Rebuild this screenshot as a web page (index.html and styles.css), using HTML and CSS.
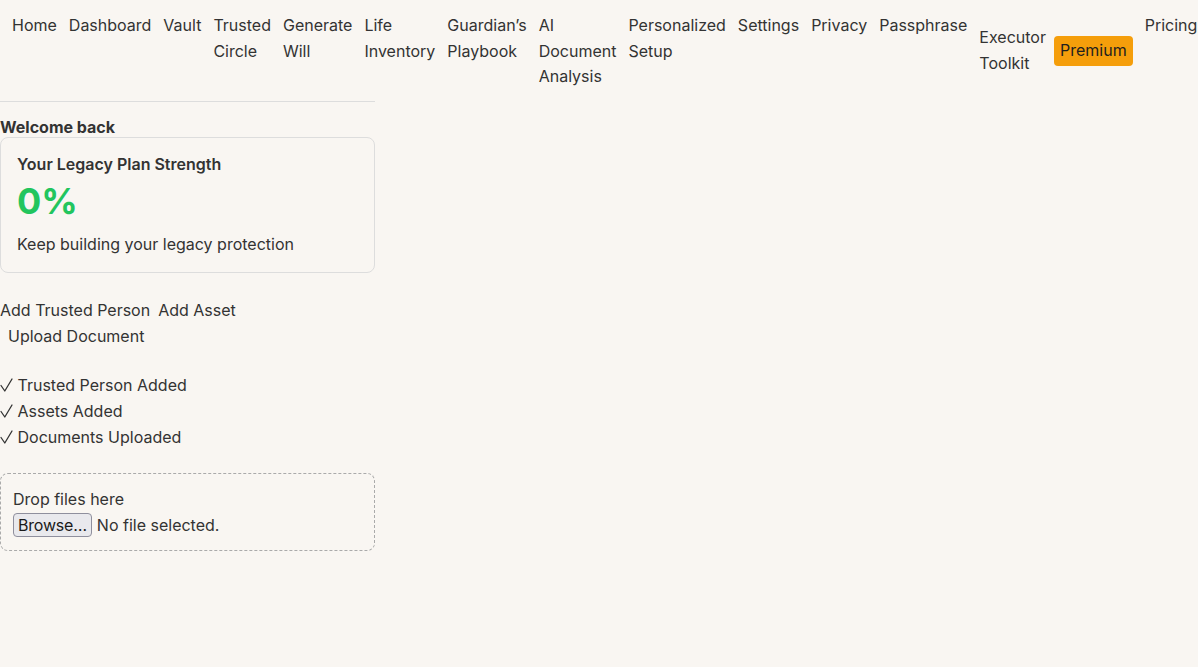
FILE: index.html
```html
<!DOCTYPE html>
<html lang="en">
<head>
<meta charset="utf-8">
<title>Legacy</title>
<link rel="stylesheet" href="styles.css">
</head>
<body>
<div class="app">
  <header class="header">
    <nav class="nav">
      <a class="nav-link" href="#">Home</a>
      <a class="nav-link" href="#">Dashboard</a>
      <a class="nav-link" href="#">Vault</a>
      <a class="nav-link" href="#">Trusted Circle</a>
      <a class="nav-link" href="#">Generate Will</a>
      <a class="nav-link" href="#">Life Inventory</a>
      <a class="nav-link" href="#">Guardian’s Playbook</a>
      <a class="nav-link" href="#">AI Document Analysis</a>
      <a class="nav-link" href="#">Personalized Setup</a>
      <a class="nav-link" href="#">Settings</a>
      <a class="nav-link" href="#">Privacy</a>
      <a class="nav-link" href="#">Passphrase</a>
      <div class="nav-group">
        <a class="nav-link" href="#">Executor Toolkit</a>
        <span class="badge">Premium</span>
      </div>
      <a class="nav-link" href="#">Pricing</a>
    </nav>
  </header>
  <main class="main">
    <h2 class="welcome">Welcome back</h2>
    <section class="card">
      <h3 class="card-title">Your Legacy Plan Strength</h3>
      <div class="score">0%</div>
      <p class="card-text">Keep building your legacy protection</p>
    </section>
    <div class="actions">
      <button class="action">Add Trusted Person</button>
      <button class="action">Add Asset</button>
      <button class="action action-upload">Upload Document</button>
    </div>
    <ul class="checklist">
      <li><svg class="check" viewBox="0 0 13 16" aria-hidden="true"><polyline points="1,8.5 4.8,14 12,2" /></svg> Trusted Person Added</li>
      <li><svg class="check" viewBox="0 0 13 16" aria-hidden="true"><polyline points="1,8.5 4.8,14 12,2" /></svg> Assets Added</li>
      <li><svg class="check" viewBox="0 0 13 16" aria-hidden="true"><polyline points="1,8.5 4.8,14 12,2" /></svg> Documents Uploaded</li>
    </ul>
    <div class="dropzone">
      <div class="drop-label">Drop files here</div>
      <div class="file-row">
        <span class="file-btn">Browse…</span>
        <span class="file-name">No file selected.</span>
      </div>
    </div>
  </main>
</div>
</body>
</html>
```
FILE: styles.css
```css
html, body {
  margin: 0;
  padding: 0;
  background: #f9f6f2;
}
body {
  font-family: Inter, "Noto Sans", sans-serif;
  font-size: 16px;
  line-height: 1.6;
  color: #333333;
}
.app {
  width: 375px;
}
.header {
  border-bottom: 1px solid #dddddd;
}
.nav {
  display: flex;
  align-items: flex-start;
  gap: 12px;
  padding: 13px 12px 11px;
}
.nav-link {
  color: #333333;
  text-decoration: none;
}
.nav-group {
  display: flex;
  align-items: center;
  gap: 8px;
  align-self: center;
  margin-top: -1px;
}
.badge {
  background: #f59e0b;
  color: #1f1f1f;
  border-radius: 4px;
  padding: 2px 6px;
  white-space: nowrap;
}
.welcome {
  font-size: 16px;
  font-weight: 700;
  line-height: 1.2;
  margin: 16px 0 0;
}
.card {
  border: 1px solid #dddddd;
  border-radius: 8px;
  padding: 17px 16px 17px;
}
.card-title {
  font-size: 16px;
  font-weight: 600;
  line-height: 1.2;
  margin: 0;
}
.score {
  font-size: 36px;
  font-weight: 700;
  line-height: 1.2;
  color: #22c55e;
  margin-top: 6px;
}
.card-text {
  margin: 12px 0 0;
  line-height: 1.2;
}
.actions {
  display: flex;
  flex-wrap: wrap;
  column-gap: 8px;
  margin-top: 24px;
  line-height: 26px;
}
.action {
  font: inherit;
  line-height: 26px;
  color: #333333;
  background: none;
  border: 0;
  padding: 0;
  cursor: pointer;
}
.action-upload {
  margin-left: 8px;
}
.checklist {
  list-style: none;
  margin: 23px 0 0;
  padding: 0;
  line-height: 26px;
}
.check {
  width: 13px;
  height: 16px;
  vertical-align: -2px;
  fill: none;
  stroke: #333333;
  stroke-width: 1.3;
  stroke-linecap: round;
  stroke-linejoin: round;
}
.dropzone {
  margin-top: 23px;
  border: 1px dashed #aaaaaa;
  border-radius: 8px;
  padding: 12px;
  line-height: 26px;
}
.file-row {
  display: flex;
  align-items: center;
  gap: 5px;
  height: 26px;
}
.file-btn {
  display: inline-block;
  background: #e9e9ed;
  border: 1px solid #8f8f9d;
  border-radius: 4px;
  padding: 0 4px;
  line-height: 22px;
  color: #1a1a1a;
  letter-spacing: -0.2px;
}
.file-name {
  color: #333333;
}
```
